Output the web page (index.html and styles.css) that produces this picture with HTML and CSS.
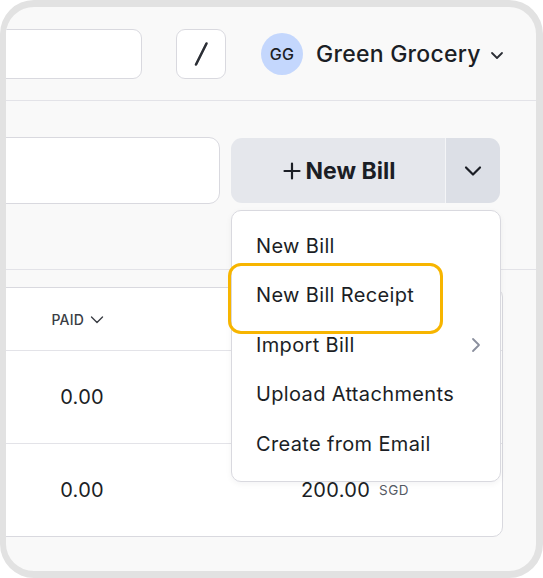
FILE: index.html
```html
<!DOCTYPE html>
<html>
<head>
<meta charset="utf-8">
<link rel="stylesheet" href="styles.css">
</head>
<body>
<div class="frame">
  <header class="topbar">
    <div class="search-box"></div>
    <button class="slash-btn" aria-label="Shortcut">
      <svg width="16" height="26" viewBox="0 0 16 26"><path d="M13.5 2.5 L3 23.5" stroke="#2b2e35" stroke-width="2.6" stroke-linecap="round"/></svg>
    </button>
    <div class="org">
      <span class="avatar">GG</span>
      <span class="org-name">Green Grocery</span>
      <svg class="org-caret" width="14" height="10" viewBox="0 0 14 10"><path d="M2 3 L7 8 L12 3" fill="none" stroke="#2b2e35" stroke-width="1.8" stroke-linecap="round" stroke-linejoin="round"/></svg>
    </div>
  </header>

  <section class="toolbar">
    <div class="filter-box"></div>
    <div class="btn-wrap">
      <div class="btn-group">
        <button class="btn-main">
          <svg width="18" height="18" viewBox="0 0 18 18"><path d="M9 1.5 V16.5 M1.5 9 H16.5" stroke="#1b1e25" stroke-width="2.2" stroke-linecap="round"/></svg>
          <span>New Bill</span>
        </button>
        <button class="btn-caret" aria-label="More">
          <svg width="18" height="12" viewBox="0 0 18 12"><path d="M2 2.5 L9 9.5 L16 2.5" fill="none" stroke="#1b1e25" stroke-width="2.2" stroke-linecap="round" stroke-linejoin="round"/></svg>
        </button>
      </div>
      <ul class="menu">
        <li class="menu-item">New Bill</li>
        <li class="menu-item focused">New Bill Receipt</li>
        <li class="menu-item has-sub">Import Bill
          <svg class="sub-caret" width="10" height="16" viewBox="0 0 10 16"><path d="M2 2 L8 8 L2 14" fill="none" stroke="#8a8f9d" stroke-width="1.8" stroke-linecap="round" stroke-linejoin="round"/></svg>
        </li>
        <li class="menu-item">Upload Attachments</li>
        <li class="menu-item">Create from Email</li>
      </ul>
    </div>
  </section>

  <div class="table-area">
    <div class="table-card">
      <div class="row head">
        <div class="cell num">PAID
          <svg width="14" height="9" viewBox="0 0 14 9"><path d="M1.5 2 L7 7.5 L12.5 2" fill="none" stroke="#3a3d44" stroke-width="1.4" stroke-linecap="round" stroke-linejoin="round"/></svg>
        </div>
        <div class="cell amt"></div>
        <div class="cell"></div>
      </div>
      <div class="row">
        <div class="cell num value">0.00</div>
        <div class="cell amt value"></div>
        <div class="cell"></div>
      </div>
      <div class="row last">
        <div class="cell num value">0.00</div>
        <div class="cell amt value">200.00 <span class="cur">SGD</span></div>
        <div class="cell"></div>
      </div>
    </div>
  </div>
</div>
</body>
</html>
```

FILE: styles.css
```css
* { box-sizing: border-box; }

html, body {
  margin: 0;
  padding: 0;
  background: #ffffff;
}

body {
  font-family: Inter, "Noto Sans", sans-serif;
  color: #1b1e25;
}

.frame {
  width: 543px;
  height: 578px;
  border: 7px solid #e2e2e2;
  border-left-width: 6px;
  border-radius: 34px;
  background: #f9f9f9;
  overflow: hidden;
  position: relative;
}

/* Top bar */
.topbar {
  height: 94px;
  border-bottom: 1px solid #e3e3e8;
  display: flex;
  align-items: center;
}

.search-box {
  width: 200px;
  height: 50px;
  margin-left: -64px;
  background: #ffffff;
  border: 1px solid #d9d9df;
  border-radius: 9px;
  flex: none;
}

.slash-btn {
  width: 50px;
  height: 50px;
  margin-left: 34px;
  background: #ffffff;
  border: 1px solid #d9d9df;
  border-radius: 9px;
  display: flex;
  align-items: center;
  justify-content: center;
  padding: 0;
  flex: none;
}

.org {
  display: flex;
  align-items: center;
  margin-left: 35px;
}

.avatar {
  width: 42px;
  height: 42px;
  border-radius: 50%;
  background: #c4d7fd;
  display: flex;
  align-items: center;
  justify-content: center;
  font-size: 16px;
  font-weight: 500;
  letter-spacing: 0.3px;
  color: #1b1e25;
}

.org-name {
  margin-left: 13px;
  font-size: 23px;
  font-weight: 500;
  letter-spacing: 0.25px;
}

.org-caret {
  margin-left: 9px;
  margin-top: 2px;
}

/* Toolbar */
.toolbar {
  height: 169px;
  border-bottom: 1px solid #e3e3e8;
  display: flex;
  align-items: flex-start;
  padding-top: 36px;
}

.filter-box {
  width: 240px;
  height: 67px;
  margin-left: -26px;
  background: #ffffff;
  border: 1px solid #d9d9df;
  border-radius: 11px;
  flex: none;
}

.btn-wrap {
  position: relative;
  margin-left: 11px;
  margin-top: 1px;
}

.btn-group {
  display: flex;
  width: 269px;
  height: 65px;
  border-radius: 11px;
  overflow: hidden;
}

.btn-main {
  width: 215px;
  border: 0;
  border-right: 1px solid #f4f5f7;
  background: #e5e7ec;
  display: flex;
  align-items: center;
  justify-content: center;
  gap: 5px;
  font-family: inherit;
  font-size: 23px;
  font-weight: 700;
  color: #1b1e25;
  padding: 0 0 0 2px;
  letter-spacing: 0;
}

.btn-caret {
  flex: 1;
  border: 0;
  background: #dcdfe6;
  display: flex;
  align-items: center;
  justify-content: center;
  padding: 0;
}

/* Dropdown menu */
.menu {
  position: absolute;
  left: 0;
  top: 72px;
  width: 270px;
  margin: 0;
  padding: 10px 0 12px;
  list-style: none;
  background: #ffffff;
  border: 1px solid #d9d9df;
  border-radius: 10px;
  box-shadow: 0 2px 6px rgba(20, 24, 35, 0.05);
  z-index: 5;
}

.menu-item {
  position: relative;
  height: 49.5px;
  display: flex;
  align-items: center;
  padding-left: 24px;
  font-size: 20px;
  letter-spacing: 0.35px;
  color: #1b1e25;
}

.menu-item.focused::after {
  content: "";
  position: absolute;
  left: -4px;
  top: -7.5px;
  width: 209px;
  height: 65px;
  border: 3px solid #f7b500;
  border-radius: 13px;
}

.sub-caret {
  position: absolute;
  right: 19px;
  top: 17px;
}

/* Table */
.table-area {
  padding-top: 17px;
}

.table-card {
  width: 507px;
  margin-left: -10px;
  background: #ffffff;
  border: 1px solid #d9d9df;
  border-radius: 10px;
}

.row {
  display: grid;
  grid-template-columns: 120px 318px 1fr;
  height: 93px;
  border-bottom: 1px solid #e3e3e8;
  align-items: center;
}

.row.head {
  height: 63px;
}

.row.last {
  border-bottom: 0;
  height: 92px;
}

.cell.num {
  text-align: right;
  padding-right: 13px;
}

.cell.amt {
  text-align: right;
  padding-right: 26px;
}

.head .cell {
  font-size: 14px;
  font-weight: 500;
  color: #3a3d44;
  letter-spacing: 0.2px;
}

.head .cell svg {
  margin-left: 2px;
  vertical-align: 1px;
}

.value {
  font-size: 20px;
  letter-spacing: 0.3px;
  color: #1b1e25;
}

.cur {
  font-size: 13.5px;
  color: #555a63;
  margin-left: 3px;
  letter-spacing: 0.5px;
  vertical-align: 2px;
}
```
